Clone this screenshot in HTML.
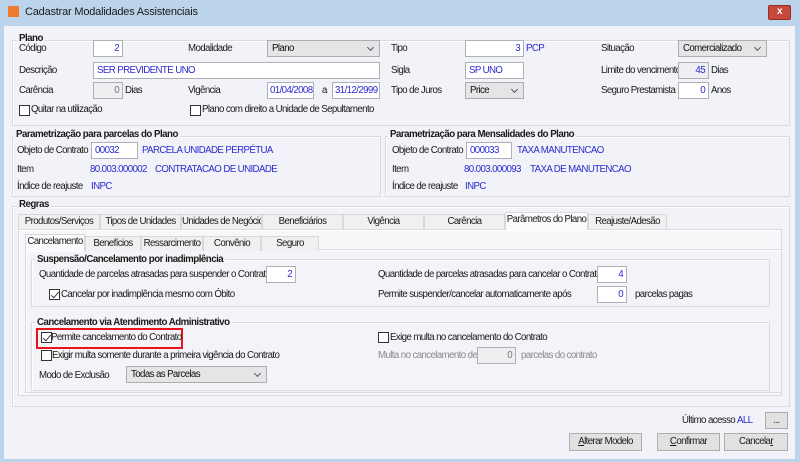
<!DOCTYPE html>
<html><head><meta charset="utf-8"><style>
*{box-sizing:border-box;margin:0;padding:0}
body{width:800px;height:462px;overflow:hidden;background:#bcd3ec;font-family:"Liberation Sans",sans-serif;font-size:9.7px;color:#1a1a1a;position:relative;letter-spacing:-0.6px}
.a{position:absolute;white-space:nowrap}
.win{position:absolute;left:4px;top:26px;width:791px;height:433px;background:#f2f3f8}
.g{position:absolute;border:1px solid #dadbe2;box-shadow:inset 1px 1px 0 #fff}
.gt{position:absolute;font-weight:bold;background:#f2f3f8;padding:0 2px;font-size:9.7px;letter-spacing:-0.5px;white-space:nowrap}
.in{position:absolute;background:#fff;border:1px solid #aeb0b8;height:17px;line-height:15px;padding:0 3px;color:#2b2bd0;white-space:nowrap;overflow:hidden}
.r{text-align:right}
.dis{background:#efeff2;color:#777}
.sel{position:absolute;background:#e5e5e7;border:1px solid #adadad;height:17px;line-height:15px;padding:0 4px;color:#111;white-space:nowrap}
.sel:after{content:"";position:absolute;right:6px;top:4px;width:4px;height:4px;border-right:1px solid #555;border-bottom:1px solid #555;transform:rotate(45deg)}
.cb{position:absolute;width:11px;height:11px;border:1px solid #333;background:#fff}
.cb.k:after{content:"";position:absolute;left:3px;top:0px;width:3px;height:7px;border-right:1.3px solid #333;border-bottom:1.3px solid #333;transform:rotate(40deg)}
.bl{color:#2b2bd0}
.tab{position:absolute;height:15px;border:1px solid #d9d9d9;border-bottom:none;background:#f0f0f0;text-align:center;line-height:14px;white-space:nowrap;overflow:hidden}
.tab.s{background:#fbfbfd;height:18px;z-index:2}
.btn{position:absolute;height:18px;border:1px solid #adadad;background:#e1e1e1;text-align:center;line-height:16px;white-space:nowrap}
</style></head><body>
<div class="a" style="left:8px;top:6px;width:11px;height:11px;background:#f07a30"></div>
<div class="a" style="left:25px;top:6px;font-size:11px;letter-spacing:-0.2px">Cadastrar Modalidades Assistenciais</div>
<div class="a" style="left:768px;top:5px;width:23px;height:15px;background:#c9483c;border:1px solid #8e2e26;border-radius:2px;color:#fff;text-align:center;line-height:12px;font-weight:bold;font-size:10px">x</div>
<div class="win"></div>

<div class="g" style="left:12px;top:40px;width:778px;height:86px"></div>
<div class="gt" style="left:17px;top:33px">Plano</div>
<div class="a" style="left:19px;top:43px">Código</div><div class="in r" style="left:93px;top:40px;width:30px">2</div>
<div class="a" style="left:188px;top:43px">Modalidade</div><div class="sel" style="left:267px;top:40px;width:113px">Plano</div>
<div class="a" style="left:391px;top:43px">Tipo</div><div class="in r" style="left:465px;top:40px;width:59px">3</div><div class="a bl" style="left:526px;top:43px">PCP</div>
<div class="a" style="left:601px;top:43px">Situação</div><div class="sel" style="left:678px;top:40px;width:89px">Comercializado</div>
<div class="a" style="left:19px;top:65px">Descrição</div><div class="in" style="left:93px;top:62px;width:287px">SER PREVIDENTE UNO</div>
<div class="a" style="left:391px;top:65px">Sigla</div><div class="in" style="left:465px;top:62px;width:59px">SP UNO</div>
<div class="a" style="left:601px;top:65px">Limite do vencimento</div><div class="in r dis" style="left:678px;top:62px;width:31px;color:#2b2bd0">45</div><div class="a" style="left:711px;top:65px">Dias</div>
<div class="a" style="left:19px;top:85px">Carência</div><div class="in r dis" style="left:93px;top:82px;width:30px">0</div><div class="a" style="left:125px;top:85px">Dias</div>
<div class="a" style="left:188px;top:85px">Vigência</div><div class="in" style="left:267px;top:82px;width:47px;padding:0 2px">01/04/2008</div><div class="a" style="left:322px;top:85px">a</div><div class="in" style="left:332px;top:82px;width:48px;padding:0 2px">31/12/2999</div>
<div class="a" style="left:391px;top:85px">Tipo de Juros</div><div class="sel" style="left:465px;top:82px;width:59px">Price</div>
<div class="a" style="left:601px;top:85px">Seguro Prestamista</div><div class="in r" style="left:678px;top:82px;width:31px">0</div><div class="a" style="left:711px;top:85px">Anos</div>
<div class="cb" style="left:19px;top:105px"></div><div class="a" style="left:31px;top:104px">Quitar na utilização</div>
<div class="cb" style="left:190px;top:105px"></div><div class="a" style="left:202px;top:104px">Plano com direito a Unidade de Sepultamento</div>

<div class="g" style="left:12px;top:136px;width:369px;height:61px"></div>
<div class="gt" style="left:14px;top:129px">Parametrização para parcelas do Plano</div>
<div class="a" style="left:17px;top:145px">Objeto de Contrato</div><div class="in" style="left:91px;top:142px;width:47px">00032</div><div class="a bl" style="left:142px;top:145px">PARCELA UNIDADE PERPÉTUA</div>
<div class="a" style="left:17px;top:164px">Item</div><div class="a bl" style="left:90px;top:164px">80.003.000002</div><div class="a bl" style="left:155px;top:164px">CONTRATACAO DE UNIDADE</div>
<div class="a" style="left:17px;top:181px">Índice de reajuste</div><div class="a bl" style="left:91px;top:181px">INPC</div>
<div class="g" style="left:385px;top:136px;width:405px;height:61px"></div>
<div class="gt" style="left:388px;top:129px">Parametrização para Mensalidades do Plano</div>
<div class="a" style="left:392px;top:145px">Objeto de Contrato</div><div class="in" style="left:466px;top:142px;width:46px">000033</div><div class="a bl" style="left:517px;top:145px">TAXA MANUTENCAO</div>
<div class="a" style="left:392px;top:164px">Item</div><div class="a bl" style="left:464px;top:164px">80.003.000093</div><div class="a bl" style="left:530px;top:164px">TAXA DE MANUTENCAO</div>
<div class="a" style="left:392px;top:181px">Índice de reajuste</div><div class="a bl" style="left:465px;top:181px">INPC</div>

<div class="g" style="left:12px;top:206px;width:778px;height:201px"></div>
<div class="gt" style="left:17px;top:199px">Regras</div>
<div class="g" style="left:18px;top:229px;width:764px;height:167px;background:#f7f7fa"></div>
<div class="tab" style="left:18px;top:214px;width:82px">Produtos/Serviços</div>
<div class="tab" style="left:100px;top:214px;width:81px">Tipos de Unidades</div>
<div class="tab" style="left:181px;top:214px;width:81px">Unidades de Negócio</div>
<div class="tab" style="left:262px;top:214px;width:81px">Beneficiários</div>
<div class="tab" style="left:343px;top:214px;width:81px">Vigência</div>
<div class="tab" style="left:424px;top:214px;width:81px">Carência</div>
<div class="tab s" style="left:505px;top:212px;width:83px">Parâmetros do Plano</div>
<div class="tab" style="left:588px;top:214px;width:79px">Reajuste/Adesão</div>
<div class="g" style="left:25px;top:249px;width:757px;height:144px;background:#f4f4f8"></div>
<div class="tab" style="left:85px;top:236px;width:56px">Benefícios</div>
<div class="tab" style="left:141px;top:236px;width:62px">Ressarcimento</div>
<div class="tab" style="left:203px;top:236px;width:58px">Convênio</div>
<div class="tab" style="left:261px;top:236px;width:58px">Seguro</div>
<div class="tab s" style="left:25px;top:234px;width:60px">Cancelamento</div>

<div class="g" style="left:31px;top:259px;width:739px;height:48px"></div>
<div class="gt" style="left:35px;top:254px;background:#f4f4f8">Suspensão/Cancelamento por inadimplência</div>
<div class="a" style="left:39px;top:269px">Quantidade de parcelas atrasadas para suspender o Contrato</div><div class="in r" style="left:266px;top:266px;width:30px">2</div>
<div class="cb k" style="left:49px;top:289px"></div><div class="a" style="left:61px;top:289px">Cancelar por inadimplência mesmo com Óbito</div>
<div class="a" style="left:378px;top:269px">Quantidade de parcelas atrasadas para cancelar o Contrato</div><div class="in r" style="left:597px;top:266px;width:30px">4</div>
<div class="a" style="left:378px;top:289px">Permite suspender/cancelar automaticamente após</div><div class="in r" style="left:597px;top:286px;width:30px">0</div><div class="a" style="left:635px;top:289px">parcelas pagas</div>

<div class="g" style="left:31px;top:322px;width:739px;height:69px"></div>
<div class="gt" style="left:35px;top:317px;background:#f4f4f8">Cancelamento via Atendimento Administrativo</div>
<div class="a" style="left:36px;top:328px;width:147px;height:21px;border:2px solid #e8141c"></div>
<div class="cb k" style="left:41px;top:332px"></div><div class="a" style="left:51px;top:332px">Permite cancelamento do Contrato</div>
<div class="cb" style="left:378px;top:332px"></div><div class="a" style="left:390px;top:332px">Exige multa no cancelamento do Contrato</div>
<div class="cb" style="left:41px;top:350px"></div><div class="a" style="left:52px;top:350px">Exigir multa somente durante a primeira vigência do Contrato</div>
<div class="a" style="left:378px;top:350px;color:#8a8a8a">Multa no cancelamento de</div><div class="in r dis" style="left:477px;top:347px;width:39px">0</div><div class="a" style="left:521px;top:350px;color:#8a8a8a">parcelas do contrato</div>
<div class="a" style="left:39px;top:370px">Modo de Exclusão</div><div class="sel" style="left:126px;top:366px;width:141px">Todas as Parcelas</div>

<div class="a" style="left:682px;top:415px">Último acesso</div><div class="a bl" style="left:737px;top:415px">ALL</div>
<div class="btn" style="left:765px;top:412px;width:23px;height:17px">...</div>
<div class="btn" style="left:569px;top:433px;width:73px"><u>A</u>lterar Modelo</div>
<div class="btn" style="left:657px;top:433px;width:63px"><u>C</u>onfirmar</div>
<div class="btn" style="left:724px;top:433px;width:64px">Cancela<u>r</u></div>
</body></html>
